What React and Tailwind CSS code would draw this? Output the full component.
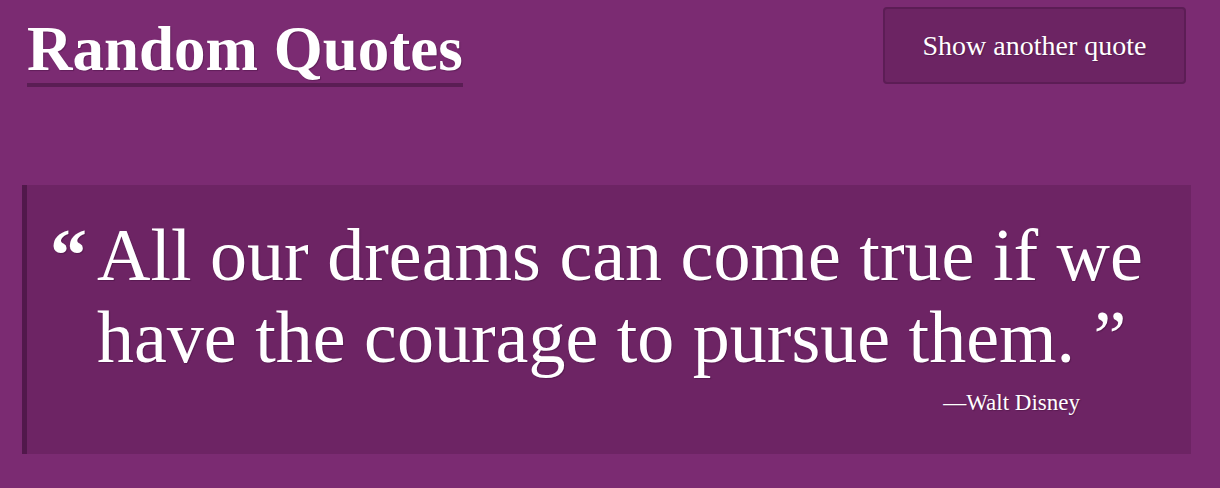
export default function App() {
  return (
    <div
      className="min-h-[488px] w-full bg-[#7b2b72] text-white"
      style={{ fontFamily: '"Liberation Serif", "Times New Roman", serif' }}
    >
      <header className="flex items-start justify-between pl-[27px] pr-[34px]">
        <h1 className="mt-[18px] border-b-[4px] border-[#5a1d54] pb-[2px] text-[63px] font-bold leading-[63px] [text-shadow:1px_1px_1px_rgba(40,0,35,0.3)]">
          Random Quotes
        </h1>
        <button className="mt-[7px] flex h-[77px] w-[303px] items-center justify-center rounded-[4px] border-2 border-[#5c1d55] bg-[#6c2463] text-[28px] leading-none text-white [text-shadow:1px_1px_1px_rgba(40,0,35,0.3)]">
          Show another quote
        </button>
      </header>

      <main className="ml-[22px] mr-[29px] mt-[98px] border-l-[5px] border-[#51184b] bg-[#6d2464] pb-[36px] pl-[70px] pr-[30px] pt-[29px]">
        <p className="text-[74px] leading-[82px] [text-shadow:1px_1px_1px_rgba(40,0,35,0.3)]">
          <span className="-ml-[47px] inline-block w-[47px] font-bold">“</span>
          {"All our dreams can come true if we have the courage to pursue them.\u00a0”"}
        </p>
        <div className="mr-[81px] mt-[10px] text-right text-[23px] leading-[30px] [text-shadow:1px_1px_1px_rgba(40,0,35,0.3)]">
          —Walt Disney
        </div>
      </main>
    </div>
  );
}
